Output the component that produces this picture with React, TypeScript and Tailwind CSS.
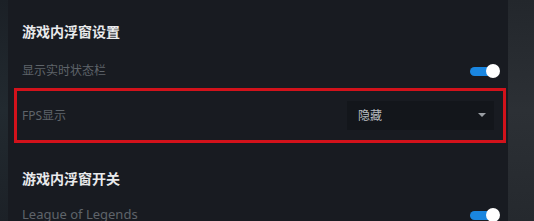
import React from "react";

function Toggle() {
  return (
    <div className="relative w-[31px] h-[14px] flex items-center">
      <div className="w-[24px] h-[9px] rounded-full bg-[#1a86e0] ml-[1px]" />
      <div className="absolute right-0 top-0 w-[14px] h-[14px] rounded-full bg-white" />
    </div>
  );
}

export default function App() {
  return (
    <div
      className="w-[534px] h-[221px] overflow-hidden flex bg-[#181c22]"
      style={{ fontFamily: '"Noto Sans", "Noto Sans CJK SC", sans-serif' }}
    >
      <div className="w-[8px] shrink-0 bg-gradient-to-b from-[#1b2026] via-[#222a30] to-[#1c2127]" />
      <div className="w-[500px] shrink-0 bg-[#181b21] flex flex-col overflow-hidden">
        <div className="shrink-0 pl-[14px] pt-[22px] h-[20px] box-content text-[14px] leading-[20px] font-bold text-[#e9eaec]">
          游戏内浮窗设置
        </div>
        <div className="shrink-0 mt-[18px] h-[22px] pl-[14px] pr-[8px] flex items-center justify-between">
          <span className="text-[12px] text-[#5f646a]">显示实时状态栏</span>
          <Toggle />
        </div>
        <div className="shrink-0 mt-[6px] ml-[6px] mr-[2px] h-[55px] border-[3px] border-[#d2121b] flex items-center justify-between pl-[5px] pr-[9px]">
          <span className="text-[12px] text-[#5f646a]">FPS显示</span>
          <div className="w-[147px] h-[29px] bg-[#13161b] flex items-center justify-between pl-[11px] pr-[8px]">
            <span className="text-[12px] text-[#b8bcc1]">隐藏</span>
            <svg width="8" height="5" viewBox="0 0 8 5">
              <path d="M0 0 L8 0 L4 4 Z" fill="#9a9ea3" />
            </svg>
          </div>
        </div>
        <div className="shrink-0 pl-[14px] mt-[26px] h-[20px] text-[14px] leading-[20px] font-bold text-[#e9eaec]">
          游戏内浮窗开关
        </div>
        <div className="shrink-0 mt-[15px] h-[22px] pl-[14px] pr-[8px] flex items-center justify-between">
          <span className="text-[13px] text-[#5f646a]">League of Legends</span>
          <Toggle />
        </div>
      </div>
      <div className="flex-1 bg-gradient-to-b from-[#23272c] via-[#2c3035] to-[#25292e]" />
    </div>
  );
}
